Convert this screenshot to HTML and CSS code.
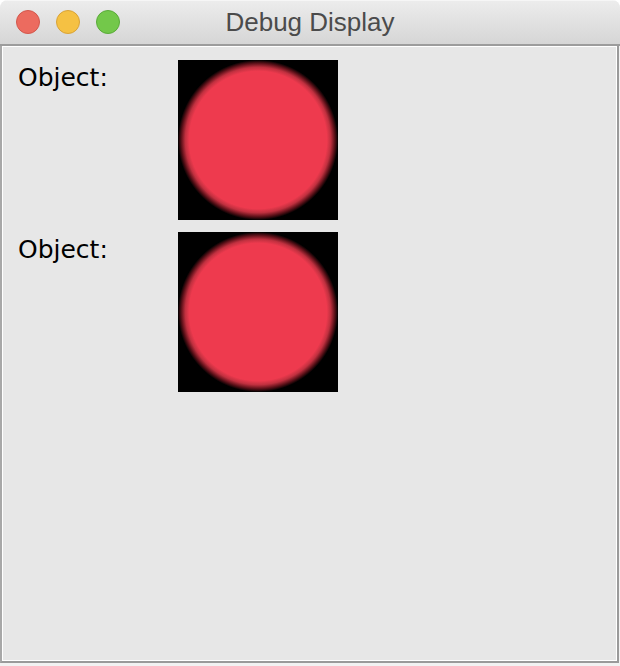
FILE: index.html
```html
<!DOCTYPE html>
<html>
<head>
<meta charset="utf-8">
<link rel="stylesheet" href="styles.css">
</head>
<body>
<div class="window">
  <div class="titlebar">
    <div class="lights">
      <span class="light red"></span>
      <span class="light yellow"></span>
      <span class="light green"></span>
    </div>
    <div class="title">Debug Display</div>
  </div>
  <div class="content">
    <div class="rows">
      <div class="row">
        <div class="label">Object:</div>
        <div class="thumb"><div class="ball"></div></div>
      </div>
      <div class="row">
        <div class="label">Object:</div>
        <div class="thumb"><div class="ball"></div></div>
      </div>
    </div>
  </div>
</div>
</body>
</html>
```

FILE: styles.css
```css
html, body {
  margin: 0;
  padding: 0;
  background: #ffffff;
}
.window {
  width: 620px;
  height: 666px;
  display: flex;
  flex-direction: column;
  border-radius: 8px 8px 0 0;
  overflow: hidden;
  background: #f2f2f2;
}
.titlebar {
  height: 46px;
  flex: none;
  position: relative;
  display: flex;
  align-items: center;
  justify-content: center;
  background: linear-gradient(#ececec, #d6d6d6);
  border-bottom: 2px solid #9c9c9c;
  box-sizing: border-box;
  border-top: 1px solid #f6f6f6;
}
.lights {
  position: absolute;
  left: 16px;
  top: 9px;
  display: flex;
  gap: 16px;
}
.light {
  width: 24px;
  height: 24px;
  border-radius: 50%;
  box-sizing: border-box;
}
.red { background: #ec6b5f; border: 1px solid #d3574c; }
.yellow { background: #f5c143; border: 1px solid #d9a337; }
.green { background: #73c84a; border: 1px solid #5aab39; }
.title {
  font-family: "Liberation Sans", Arial, sans-serif;
  font-size: 26px;
  color: #4b4b4b;
  margin-top: -1px;
}
.content {
  flex: 1;
  margin: 0 1px 3px 0;
  background: #e7e7e7;
  border-left: 2px solid #a8a8a8;
  border-right: 2px solid #9a9a9a;
  border-bottom: 2px solid #9a9a9a;
  box-shadow: inset 1px 1px 0 #ffffff, inset -1px -1px 0 #ffffff;
  padding: 14px 0 0 16px;
}
.rows {
  display: flex;
  flex-direction: column;
  gap: 12px;
}
.row {
  display: grid;
  grid-template-columns: 160px 160px;
}
.label {
  font-family: "DejaVu Sans", sans-serif;
  font-size: 25px;
  line-height: 29px;
  padding-top: 3px;
  color: #000;
}
.thumb {
  width: 160px;
  height: 160px;
  background: #000;
  display: flex;
  align-items: center;
  justify-content: center;
}
.ball {
  width: 160px;
  height: 160px;
  background: radial-gradient(circle closest-side, #ee3a4e 0, #ee3a4e 86%, #c0303f 91%, #5a1018 96%, #000 100%);
}
```
